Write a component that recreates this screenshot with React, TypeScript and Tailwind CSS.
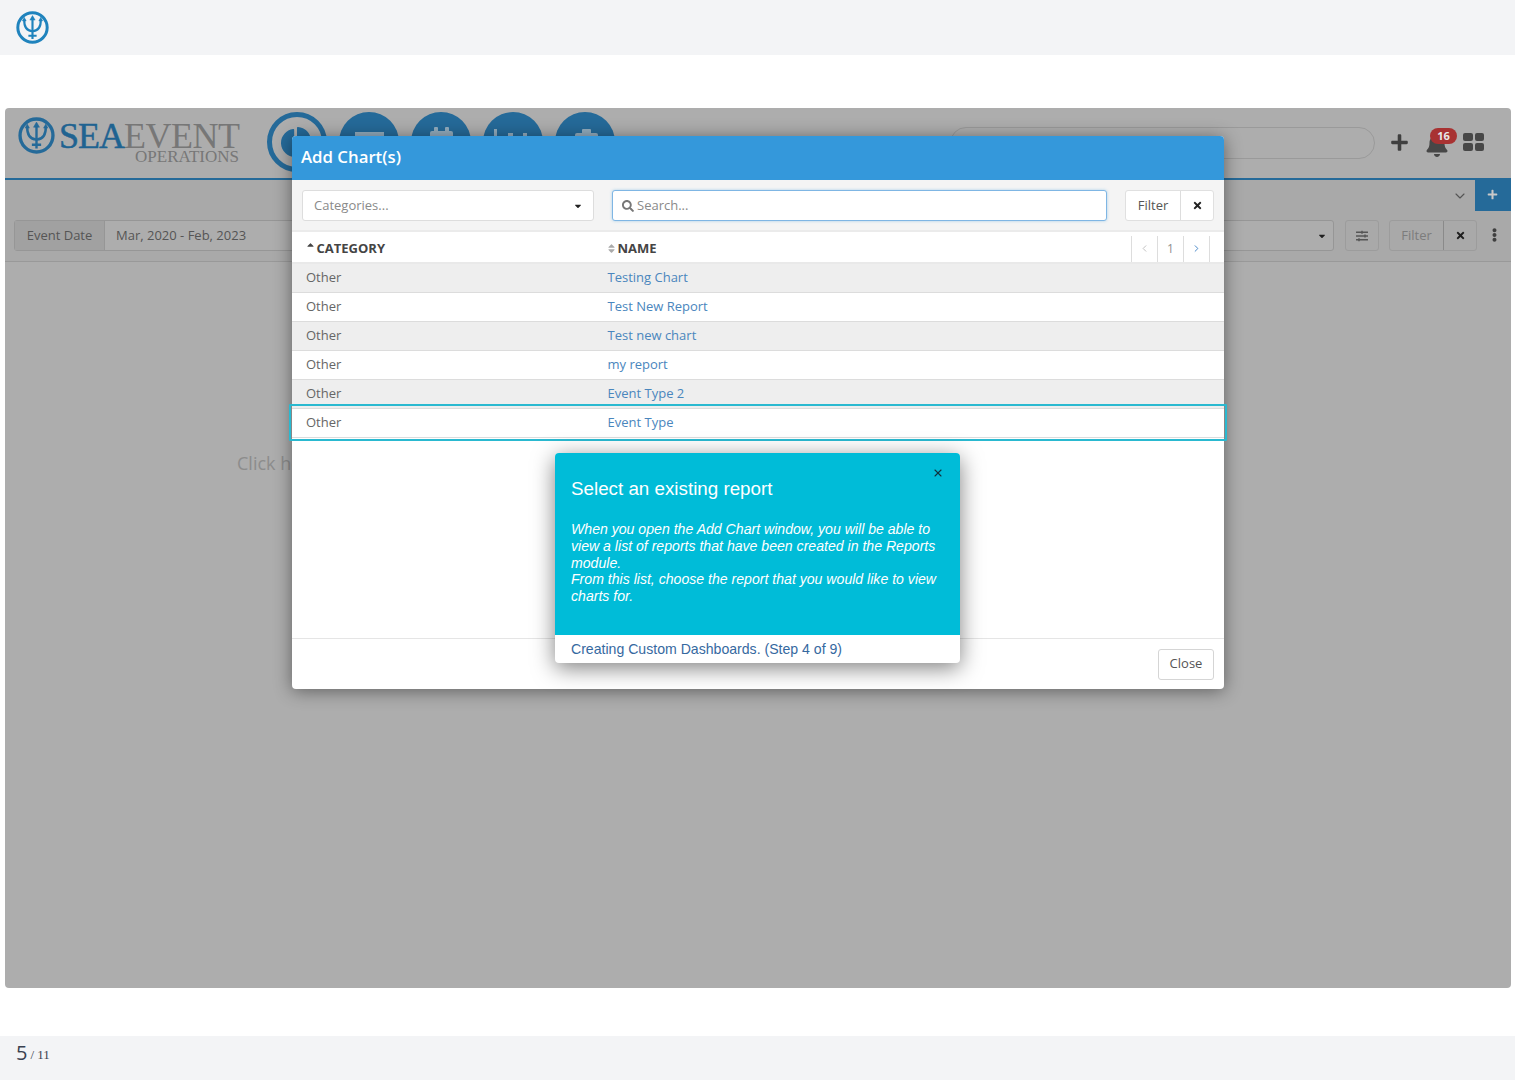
import { FaBell, FaCaretDown, FaChartPie, FaEllipsisV, FaPlus, FaSearch, FaSlidersH, FaSort, FaSortUp, FaTimes } from "react-icons/fa";
import { ChevronDown, ChevronLeft, ChevronRight, X } from "lucide-react";

const rows = ["Testing Chart", "Test New Report", "Test new chart", "my report", "Event Type 2", "Event Type"];

function TridentLogo({ className }: { className: string }) {
  return (
    <svg viewBox="0 0 40 40" fill="none" stroke="currentColor" className={className}>
      <circle cx="20" cy="20" r="17.800" strokeWidth="3.600" />
      <path d="M20 8v26M15 30h10" strokeWidth="2.600" />
      <path d="M20 5.500l-3.200 5.500h6.400z" fill="currentColor" strokeWidth="0.600" />
      <path d="M10 10c-.4 9 3 14 10 14.500 7-.5 10.400-5.500 10-14.500" strokeWidth="2.600" />
      <path d="M10 7.500l-2.400 4.500h4.800zM30 7.500l-2.400 4.500h4.800z" fill="currentColor" strokeWidth="0.500" />
    </svg>
  );
}

function NavCircle({ children }: { children: React.ReactNode }) {
  return (
    <div className="w-[60px] h-[60px] rounded-full bg-[#256a99]">
      <svg viewBox="0 0 60 60" fill="#93adbf" className="w-[60px] h-[60px]">
        {children}
      </svg>
    </div>
  );
}

export default function App() {
  return (
    <div className="w-[1515px] h-[1080px] flex flex-col bg-white overflow-hidden font-['Open_Sans',sans-serif]">
      <div className="h-[55px] bg-[#f3f4f6] flex items-center pl-[16px] shrink-0">
        <TridentLogo className="w-[33px] h-[33px] text-[#1f83bd]" />
      </div>

      <div className="flex-1 pt-[53px] pl-[5px]">
        {/* the dimmed app behind the dialog */}
        <div className="relative w-[1506px] h-[880px] rounded-[4px] bg-[#adadad] flex flex-col">
          <div className="h-[72px] border-b-[2px] border-[#256a99] flex pl-[13px] shrink-0">
            <div className="w-[221px] pt-[9px] flex flex-col">
              <div className="flex items-center h-[37px]">
                <TridentLogo className="w-[37px] h-[37px] text-[#256a99] shrink-0" />
                <span className="ml-[4px] font-['Liberation_Serif',serif] text-[36px] leading-[30px] text-[#1f6391] [-webkit-text-stroke:0.5px_#1f6391] tracking-[-1px]">SEA</span>
                <span className="font-['Liberation_Serif',serif] text-[36px] leading-[30px] text-[#777777] tracking-[-0.500px]">EVENT</span>
              </div>
              <div className="mt-[-4px] self-end font-['Liberation_Serif',serif] text-[17px] leading-[14px] text-[#777777] whitespace-nowrap">OPERATIONS</div>
            </div>
            <div className="ml-[28px] pt-[4px] flex gap-[12px]">
              <div className="w-[60px] h-[60px] rounded-full border-[5px] border-[#256a99] flex items-center justify-center text-[#256a99]">
                <FaChartPie className="w-[32px] h-[32px]" />
              </div>
              <NavCircle><rect x="16" y="20" width="29" height="8" /></NavCircle>
              <NavCircle>
                <rect x="23" y="15" width="4" height="8" rx="1" />
                <rect x="34" y="15" width="4" height="8" rx="1" />
                <rect x="19" y="19" width="23" height="18" rx="2" />
              </NavCircle>
              <NavCircle>
                <rect x="11" y="17" width="3" height="26" />
                <rect x="25" y="21" width="5" height="22" />
                <rect x="40" y="21" width="4" height="22" />
              </NavCircle>
              <NavCircle>
                <rect x="27" y="17" width="9" height="6" rx="1" />
                <rect x="20" y="21" width="23" height="20" rx="2" />
              </NavCircle>
            </div>
            <div className="ml-[335px] mt-[19px] w-[425px] h-[32px] rounded-full border border-[#9a9a9a]"></div>
            <div className="ml-[15px] mt-[25px] flex text-[#3f3f3f]">
              <FaPlus className="w-[19px] h-[19px]" />
              <div className="relative ml-[16px] w-[24px] h-[24px]">
                <FaBell className="w-[24px] h-[24px] text-[#474747]" />
                <span className="absolute left-[5px] top-[-5px] h-[16px] w-[27px] rounded-full bg-[#a83232] text-[#e8e8e8] text-[11px] leading-[16px] font-bold text-center">16</span>
              </div>
              <div className="ml-[14px] grid grid-cols-2 gap-[2px] w-[21px] h-[18px]">
                <span className="bg-[#474747] rounded-[2px]"></span>
                <span className="bg-[#474747] rounded-[2px]"></span>
                <span className="bg-[#474747] rounded-[2px]"></span>
                <span className="bg-[#474747] rounded-[2px]"></span>
              </div>
            </div>
          </div>

          <div className="h-[31px] bg-[#a9a9a9] flex justify-end items-center shrink-0">
            <ChevronDown className="w-[16px] h-[16px] text-[#555555] mr-[7px]" strokeWidth={1.700} />
            <div className="w-[36px] h-[31px] bg-[#256a99] flex items-center justify-center text-[#c9c9c9] pr-[2px] pb-[2px]">
              <FaPlus className="w-[11px] h-[11px]" />
            </div>
          </div>

          <div className="h-[51px] bg-[#a9a9a9] border-b border-[#999999] flex pt-[9px] pl-[9px] text-[13px] text-[#555555] shrink-0">
            <div className="flex w-[1320px] h-[31px] rounded-[3px] border border-[#969696] bg-[#adadad] shrink-0">
              <div className="w-[90px] h-full bg-[#a1a1a1] border-r border-[#969696] flex items-center justify-center">Event Date</div>
              <div className="flex-1 flex items-center pl-[11px]">Mar, 2020 - Feb, 2023</div>
              <div className="w-[22px] flex items-center justify-center text-[#1f1f1f]"><FaCaretDown className="w-[10px] h-[10px]" /></div>
            </div>
            <div className="ml-[11px] w-[34px] h-[31px] rounded-[3px] border border-[#9c9c9c] flex items-center justify-center shrink-0">
              <FaSlidersH className="w-[12px] h-[12px] text-[#555555]" />
            </div>
            <div className="ml-[10px] flex h-[31px] w-[88px] rounded-[3px] border border-[#9c9c9c] shrink-0">
              <div className="w-[54px] border-r border-[#8a8a8a] flex items-center justify-center text-[#7c7c7c]">Filter</div>
              <div className="flex-1 flex items-center justify-center text-[#1f1f1f]"><FaTimes className="w-[11px] h-[11px]" /></div>
            </div>
            <FaEllipsisV className="ml-[11px] mt-[8px] w-[13px] h-[14px] text-[#3f3f3f] shrink-0" />
          </div>

          <div className="pl-[232px] pt-[189px] text-[18px] leading-[24px] text-[#8c8c8c] whitespace-nowrap">Click here</div>

          {/* Add Chart(s) dialog */}
          <div className="absolute left-[287px] top-[28px] w-[932px] h-[553px] bg-white rounded-[4px] shadow-[0_2px_18px_rgba(0,0,0,0.45)] flex flex-col">
            <div className="h-[44px] bg-[#3498db] rounded-t-[4px] flex items-center pl-[9px] pb-[2px] text-[16.800px] font-semibold text-white shrink-0">Add Chart(s)</div>
            <div className="h-[52px] bg-[#f4f4f4] border-b-[2px] border-[#ebebeb] flex items-center pl-[10px] pt-[1px] text-[13px] shrink-0">
              <div className="w-[292px] h-[31px] rounded-[3px] border border-[#dddddd] bg-white flex items-center justify-between pl-[11px] pr-[10px] text-[#8a8a8a]">
                Categories...
                <FaCaretDown className="w-[10px] h-[10px] text-[#222222]" />
              </div>
              <div className="ml-[18px] w-[495px] h-[31px] rounded-[3px] border border-[#7fb6e4] bg-white flex items-center pl-[9px] text-[#8a8a8a] shadow-[0_0_3px_rgba(52,152,219,0.4)]">
                <FaSearch className="w-[12px] h-[12px] text-[#777777] mr-[3px]" />
                Search...
              </div>
              <div className="ml-[18px] flex w-[89px] h-[31px] rounded-[3px] border border-[#e0e0e0] bg-white">
                <div className="w-[55px] border-r border-[#dddddd] flex items-center justify-center text-[#555555]">Filter</div>
                <div className="flex-1 flex items-center justify-center text-[#222222]"><FaTimes className="w-[11px] h-[11px]" /></div>
              </div>
            </div>

            <div className="h-[32px] border-b-[2px] border-[#e9e9e9] flex items-center text-[13px] font-bold text-[#444444] shrink-0">
              <div className="w-[301px] pl-[14px] pt-[3px] flex items-center">
                <FaSortUp className="w-[11px] h-[11px] text-[#444444] mb-[2px] mr-[0.500px] ml-[-1px]" />
                CATEGORY
              </div>
              <div className="w-[538px] pl-[14px] pt-[3px] flex items-center">
                <FaSort className="w-[11px] h-[11px] text-[#aaaaaa] mr-[0.500px] ml-[-1px]" />
                NAME
              </div>
              <div className="flex h-[26px] mt-[3px] font-normal text-[12px] border-l border-[#dddddd]">
                <div className="w-[26px] border-r border-[#dddddd] flex items-center justify-center text-[#bbbbbb]"><ChevronLeft className="w-[11px] h-[11px]" /></div>
                <div className="w-[26px] border-r border-[#dddddd] flex items-center justify-center text-[#8f8f8f]">1</div>
                <div className="w-[26px] border-r border-[#dddddd] flex items-center justify-center text-[#3b7fc4]"><ChevronRight className="w-[11px] h-[11px]" /></div>
              </div>
            </div>

            {rows.map((name, i) => (
              <div key={name} className={`h-[29px] border-b border-[#dcdcdc] flex items-center text-[13px] shrink-0 ${i % 2 === 0 ? "bg-[#eeeeee]" : "bg-white"}`}>
                <div className="w-[301px] pl-[14px] text-[#666666]">Other</div>
                <div className="pl-[14.500px] text-[#4a86bd]">{name}</div>
              </div>
            ))}

            <div className="flex-1"></div>
            <div className="h-[51px] border-t border-[#e5e5e5] flex items-center justify-end pr-[10px] shrink-0">
              <div className="w-[56px] h-[31px] rounded-[3px] border border-[#d5d5d5] flex items-center justify-center text-[13px] text-[#555555]">Close</div>
            </div>
          </div>

          {/* highlight round the selected row */}
          <div className="absolute left-[284px] top-[295.500px] w-[938px] h-[37px] border-[2.500px] border-[#2ab9d0] rounded-[1px] pointer-events-none"></div>

          {/* tour step */}
          <div className="absolute left-[550px] top-[345px] w-[405px] h-[210px] rounded-[4px] bg-white shadow-[0_5px_22px_rgba(0,0,0,0.5)] flex flex-col font-['Liberation_Sans',sans-serif]">
            <div className="relative h-[182px] bg-[#00bcd8] rounded-t-[4px] pl-[16px] pr-[20px] pt-[24px] text-white shrink-0">
              <X className="absolute right-[16px] top-[14px] w-[12px] h-[12px] text-[#11333f]" strokeWidth={2.200} />
              <div className="text-[18.800px] leading-[24px]">Select an existing report</div>
              <div className="mt-[20px] text-[14.100px] leading-[16.800px] italic">
                When you open the Add Chart window, you will be able to view a list of reports that have been created in the Reports module.
                <br />
                From this list, choose the report that you would like to view charts for.
              </div>
            </div>
            <div className="flex-1 pl-[16px] pt-[1px] flex items-center text-[14.100px] text-[#36699f]">Creating Custom Dashboards. (Step 4 of 9)</div>
          </div>
        </div>
      </div>

      <div className="h-[44px] bg-[#f3f4f6] flex items-center pl-[16px] pb-[10px] text-[#3a4150] shrink-0">
        <span className="text-[20px] font-['Open_Sans',sans-serif]">5</span>
        <span className="ml-[3px] mt-[3px] text-[13px] font-['Liberation_Serif',serif]">/ 11</span>
      </div>
    </div>
  );
}
